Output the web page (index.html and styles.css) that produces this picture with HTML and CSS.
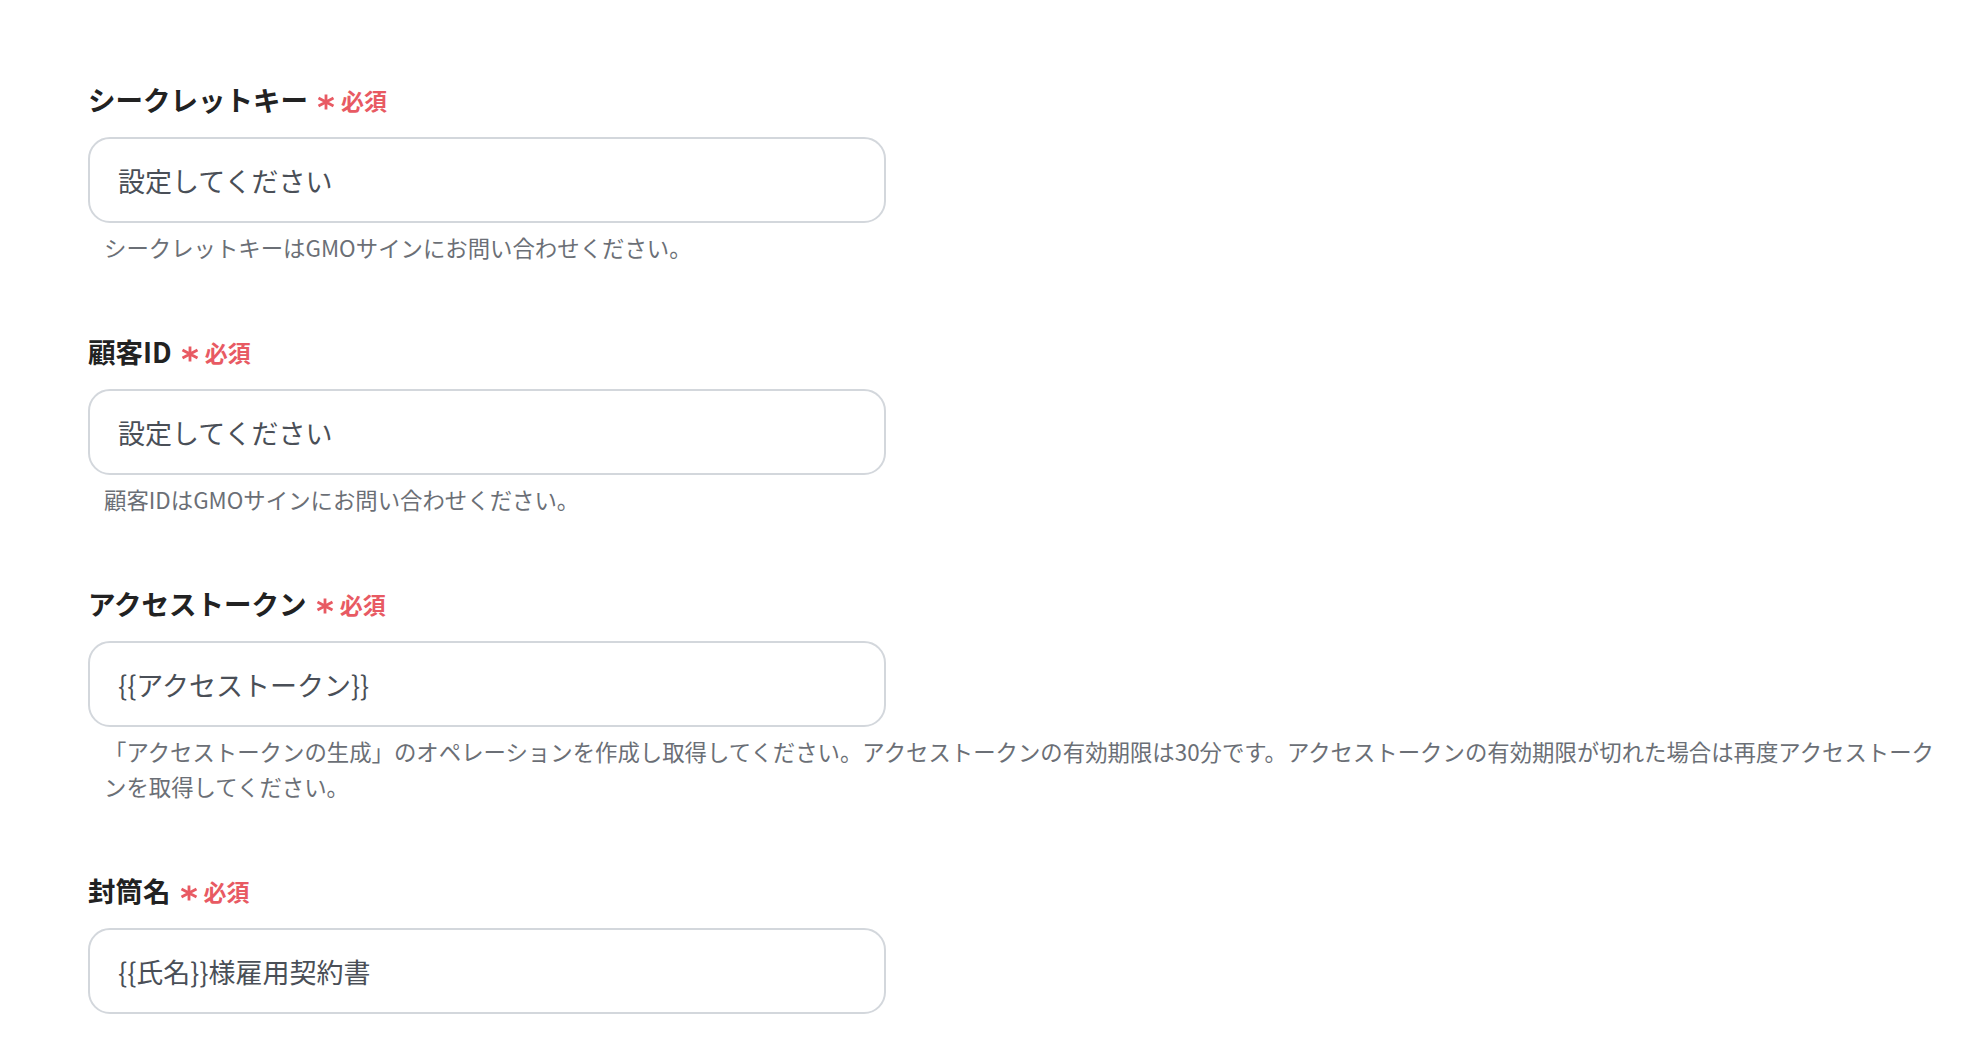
FILE: index.html
```html
<!DOCTYPE html>
<html lang="ja">
<head>
    <meta charset="UTF-8">
    <title>GMOサイン 設定</title>
    <link rel="stylesheet" href="styles.css">
</head>
<body>
<div class="form">
    <div class="field">
        <label class="field-label">シークレットキー
            <svg class="req-mark" width="18" height="16" viewBox="0 0 18 16"><path d="M9 0.5V15.5M1.5 4L16.5 12M1.5 12L16.5 4"/></svg>
            <span class="req">必須</span>
        </label>
        <input class="field-input" type="text" placeholder="設定してください">
        <p class="field-help">シークレットキーはGMOサインにお問い合わせください。</p>
    </div>
    <div class="field">
        <label class="field-label">顧客ID
            <svg class="req-mark" width="18" height="16" viewBox="0 0 18 16"><path d="M9 0.5V15.5M1.5 4L16.5 12M1.5 12L16.5 4"/></svg>
            <span class="req">必須</span>
        </label>
        <input class="field-input" type="text" placeholder="設定してください">
        <p class="field-help">顧客IDはGMOサインにお問い合わせください。</p>
    </div>
    <div class="field">
        <label class="field-label">アクセストークン
            <svg class="req-mark" width="18" height="16" viewBox="0 0 18 16"><path d="M9 0.5V15.5M1.5 4L16.5 12M1.5 12L16.5 4"/></svg>
            <span class="req">必須</span>
        </label>
        <input class="field-input" type="text" value="{{アクセストークン}}">
        <p class="field-help">「アクセストークンの生成」のオペレーションを作成し取得してください。アクセストークンの有効期限は30分です。アクセストークンの有効期限が切れた場合は再度アクセストークンを取得してください。</p>
    </div>
    <div class="field">
        <label class="field-label">封筒名
            <svg class="req-mark" width="18" height="16" viewBox="0 0 18 16"><path d="M9 0.5V15.5M1.5 4L16.5 12M1.5 12L16.5 4"/></svg>
            <span class="req">必須</span>
        </label>
        <input class="field-input" type="text" value="{{氏名}}様雇用契約書">
    </div>
</div>
</body>
</html>
```

FILE: styles.css
```css
*{
    margin: 0;
    padding: 0;
    box-sizing: border-box;
}
body{
    background: #ffffff;
    font-family: "Noto Sans CJK JP", "Noto Sans", sans-serif;
}
.form{
    padding: 79px 12px 0 88px;
}
.field{
    margin-bottom: 66px;
}
.field-label{
    display: flex;
    align-items: center;
    height: 40px;
    font-size: 27.5px;
    font-weight: bold;
    color: #222222;
}
.req-mark{
    margin: 6px 6px 0 9px;
    fill: none;
    stroke: #e85a63;
    stroke-width: 2.8;
}
.req{
    font-size: 23px;
    font-weight: bold;
    color: #e85a63;
    margin-top: 2px;
}
.field-input{
    display: block;
    width: 798px;
    height: 86px;
    margin-top: 18px;
    padding: 0 28px;
    border: 2px solid #d3d7dc;
    border-radius: 22px;
    background: #ffffff;
    font-family: "Noto Sans CJK JP", "Noto Sans", sans-serif;
    font-size: 27px;
    color: #4a4f57;
    outline: none;
}
.field-input::placeholder{
    color: #4a4f57;
    opacity: 1;
}
.field-help{
    margin-top: 7px;
    padding-left: 16px;
    font-size: 22.4px;
    line-height: 35px;
    color: #6b6f76;
}
```
